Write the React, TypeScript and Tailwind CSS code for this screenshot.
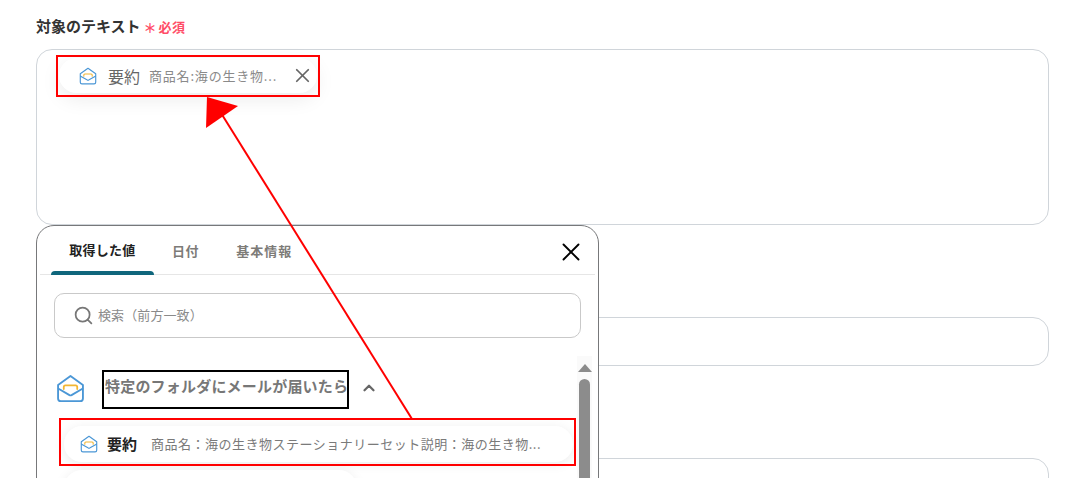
import { ChevronUp, Search, X } from "lucide-react";

const FONT = "font-['Noto_Sans_CJK_JP','Noto_Sans',sans-serif]";

function MailIcon({ className }: { className?: string }) {
  return (
    <svg viewBox="0 0 28 28" fill="none" className={className}>
      <path
        d="M7.5 14.5v-2c0-.9.7-1.6 1.6-1.6h9.8c.9 0 1.6.7 1.6 1.6v2"
        stroke="#f2b632"
        strokeWidth="1.7"
        strokeLinecap="round"
      />
      <path
        d="M2 10.6 14 2l12 8.6v13a2.6 2.6 0 0 1-2.6 2.6H4.6A2.6 2.6 0 0 1 2 23.6z"
        stroke="#4b97d6"
        strokeWidth="1.8"
        strokeLinejoin="round"
      />
      <path
        d="M2.5 14.2 13 20.4c.6.3 1.4.3 2 0l10.5-6.2"
        stroke="#4b97d6"
        strokeWidth="1.8"
        strokeLinecap="round"
      />
    </svg>
  );
}

function Field({ className }: { className: string }) {
  return <div className={`rounded-2xl border border-[#d0d5da] bg-white ${className}`} />;
}

function VariablePanel() {
  return (
    <div className="absolute left-[36px] top-[225px] h-[280px] w-[563px] rounded-t-[18px] border border-[#77787a] bg-white">
      <div className="mx-[3px] flex h-[49px] items-end border-b border-[#e6e6e6] pl-[11px] pr-[9px]">
        <div className="relative flex h-[48px] w-[103px] items-center justify-center pb-[1px] text-[13px] font-bold tracking-[0.25px] text-[#222]">
          取得した値
          <div className="absolute inset-x-0 bottom-[-1px] h-1 rounded-t-[4px] bg-[#0f667c]" />
        </div>
        <span className="ml-[18px] mb-[14px] text-[13px] font-bold tracking-[0.6px] text-[#7d7b78]">日付</span>
        <span className="ml-[37px] mb-[14px] text-[13px] font-bold tracking-[1px] text-[#7d7b78]">基本情報</span>
        <X className="ml-auto mb-[7px] size-[30px] text-black" strokeWidth={1.5} />
      </div>
      <div className="mx-[17px] mt-[18px] flex h-[45px] w-[527px] items-center rounded-[10px] border border-[#c9c9c9] pb-[1px] pl-[18px] text-[13px] tracking-[0.1px] text-[#8a8a8a]">
        <Search className="mr-[4px] size-[21px] text-[#777]" strokeWidth={2} />
        検索（前方一致）
      </div>
      <div className="relative mt-[18px] pl-[19px]">
        <div className="flex h-[64px] items-center pb-[3px]">
          <MailIcon className="mt-[3px] size-[29px]" />
          <span className="ml-[20px] text-[15px] font-bold tracking-[0.2px] text-[#777]">特定のフォルダにメールが届いたら</span>
          <ChevronUp className="ml-[12px] mt-[3px] size-[18px] text-[#666]" strokeWidth={3} />
        </div>
        <div className="ml-[8px] mt-[6px] flex h-[36px] w-[509px] items-center rounded-full bg-white pl-[16px] shadow-[0_2px_12px_rgba(0,0,0,0.08)]">
          <MailIcon className="size-[18px]" />
          <span className="ml-[9px] text-[15px] font-bold text-[#222]">要約</span>
          <span className="ml-[14px] text-[13px] tracking-[0.5px] text-[#7a7a7a]">商品名：海の生き物ステーショナリーセット説明：海の生き物...</span>
        </div>
        <div className="ml-[8px] mt-[8px] h-[36px] w-[293px] rounded-full bg-white shadow-[0_2px_12px_rgba(0,0,0,0.08)]" />
        <div className="absolute right-[6px] top-0 flex h-[200px] w-[15px] flex-col items-center bg-[#fafafa]">
          <div className="mt-[8px] size-0 border-x-[7px] border-b-[8px] border-x-transparent border-b-[#8b8b8b]" />
          <div className="mt-[7px] h-[120px] w-[11px] rounded-t-full bg-[#8c8c8c]" />
        </div>
      </div>
    </div>
  );
}

function Annotations() {
  return (
    <>
      <div className="absolute left-[56px] top-[55px] h-[42px] w-[264px] border-2 border-[#f00]" />
      <div className="absolute left-[59px] top-[418px] h-[48px] w-[517px] border-2 border-[#f00]" />
      <div className="absolute left-[102px] top-[370px] h-[39px] w-[247px] border-2 border-black" />
      <svg className="absolute inset-0 size-full" viewBox="0 0 1084 478" fill="none">
        <path d="M412 419 221 113" stroke="#f00" strokeWidth="2" />
        <path d="M207 97 238 106 206 128z" fill="#f00" />
      </svg>
    </>
  );
}

export default function App() {
  return (
    <div className={`relative h-[478px] w-[1084px] overflow-hidden bg-white ${FONT}`}>
      <div className="px-[36px] pt-[15px]">
        <div className="flex h-[22px] items-center">
          <span className="text-[15px] font-bold text-[#333]">対象のテキスト</span>
          <span className="ml-[3px] mt-[3px] text-[13px] font-bold leading-none text-[#ff4d67]">＊</span>
          <span className="ml-[2px] mt-[2px] text-[13px] font-bold tracking-[0.5px] text-[#ff4d67]">必須</span>
        </div>
        <div className="mt-[12px] h-[176px] w-[1013px] rounded-2xl border border-[#d0d5da] bg-white pl-[22px] pt-[8px]">
          <div className="flex h-[35px] w-[258px] items-center rounded-full bg-white pl-[20px] shadow-[0_6px_20px_rgba(0,0,0,0.08)]">
            <MailIcon className="size-[18px]" />
            <span className="ml-[11px] text-[16px] text-[#666]">要約</span>
            <span className="ml-[9px] text-[13px] tracking-[0.8px] text-[#8a8a8a]">商品名:海の生き物...</span>
            <X className="ml-[14px] size-[23px] text-[#666]" strokeWidth={1.8} />
          </div>
        </div>
        <Field className="mt-[92px] h-[49px] w-[1013px]" />
        <Field className="mt-[92px] h-[60px] w-[1013px]" />
      </div>
      <VariablePanel />
      <Annotations />
    </div>
  );
}
